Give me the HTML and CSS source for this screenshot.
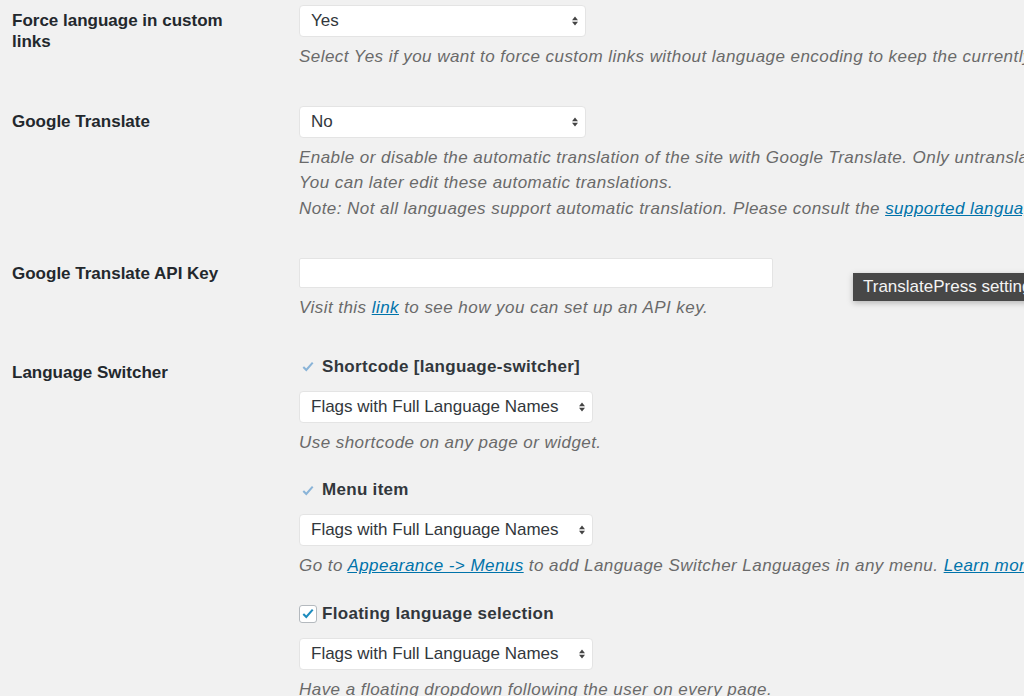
FILE: index.html
```html
<!DOCTYPE html>
<html lang="en">
<head>
  <meta charset="UTF-8">
  <meta name="viewport" content="width=device-width, initial-scale=1.0">
  <title>TranslatePress Settings</title>
  <link rel="stylesheet" href="styles.css">
</head>
<body>
  <div class="settings">

    <div class="row">
      <div class="label">Force language in custom links</div>
      <div class="field">
        <div class="select select-short"><span>Yes</span><svg class="arrows" viewBox="0 0 8 12"><path d="M4 0 L8 5 H0 Z M4 12 L8 7 H0 Z"/></svg></div>
        <p class="desc">Select Yes if you want to force custom links without language encoding to keep the currently selected language.</p>
      </div>
    </div>

    <div class="row">
      <div class="label">Google Translate</div>
      <div class="field">
        <div class="select select-short"><span>No</span><svg class="arrows" viewBox="0 0 8 12"><path d="M4 0 L8 5 H0 Z M4 12 L8 7 H0 Z"/></svg></div>
        <p class="desc">Enable or disable the automatic translation of the site with Google Translate. Only untranslated strings will receive a translation.<br>
        You can later edit these automatic translations.<br>
        Note: Not all languages support automatic translation. Please consult the <a href="#">supported languages list</a>.</p>
      </div>
    </div>

    <div class="row row-key">
      <div class="label">Google Translate API Key</div>
      <div class="field">
        <div class="input"></div>
        <p class="desc">Visit this <a href="#">link</a> to see how you can set up an API key.</p>
      </div>
    </div>

    <div class="row row-switcher">
      <div class="label">Language Switcher</div>
      <div class="field">
        <div class="check check-off"><span class="box"><svg viewBox="0 0 14 12"><path d="M1.5 6.5 L5 10 L12.5 1.5"/></svg></span>Shortcode [language-switcher]</div>
        <div class="select select-auto"><span>Flags with Full Language Names</span><svg class="arrows" viewBox="0 0 8 12"><path d="M4 0 L8 5 H0 Z M4 12 L8 7 H0 Z"/></svg></div>
        <p class="desc">Use shortcode on any page or widget.</p>

        <div class="check check-off"><span class="box"><svg viewBox="0 0 14 12"><path d="M1.5 6.5 L5 10 L12.5 1.5"/></svg></span>Menu item</div>
        <div class="select select-auto"><span>Flags with Full Language Names</span><svg class="arrows" viewBox="0 0 8 12"><path d="M4 0 L8 5 H0 Z M4 12 L8 7 H0 Z"/></svg></div>
        <p class="desc">Go to <a href="#">Appearance -&gt; Menus</a> to add Language Switcher Languages in any menu. <a href="#">Learn more in our documentation.</a></p>

        <div class="check check-on"><span class="box"><svg viewBox="0 0 14 12"><path d="M1.5 6.5 L5 10 L12.5 1.5"/></svg></span>Floating language selection</div>
        <div class="select select-auto"><span>Flags with Full Language Names</span><svg class="arrows" viewBox="0 0 8 12"><path d="M4 0 L8 5 H0 Z M4 12 L8 7 H0 Z"/></svg></div>
        <p class="desc">Have a floating dropdown following the user on every page.</p>
      </div>
    </div>

  </div>

  <div class="tooltip">TranslatePress settings</div>
</body>
</html>
```

FILE: styles.css
```css
html, body {
  margin: 0;
  overflow: hidden;
  background-color: #f1f1f1;
}

body {
  font-family: "Liberation Sans", Arial, sans-serif;
  color: #23282d;
  width: 1024px;
  height: 696px;
  position: relative;
}

/* Form table */
.settings {
  padding: 5px 0 0 12px;
}

.row {
  display: flex;
  margin-bottom: 36px;
}
.row-key { margin-top: 2px; }

.label {
  width: 232px;
  flex-shrink: 0;
  margin-right: 55px;
  padding-top: 5px;
  font-size: 17px;
  font-weight: bold;
  line-height: 21px;
  color: #23282d;
}

.field {
  flex: 1;
  min-width: 0;
}

/* Selects and inputs */
.select {
  display: flex;
  align-items: center;
  justify-content: space-between;
  box-sizing: border-box;
  height: 32px;
  padding: 0 7px 0 11px;
  background-color: #fff;
  border: 1px solid #e4e4e4;
  border-radius: 4px;
  font-size: 17px;
  color: #32373c;
}
.select-short { width: 287px; }
.select-auto { width: 294px; }

.arrows {
  width: 6px;
  height: 12px;
  fill: #444;
}

.input {
  box-sizing: border-box;
  width: 474px;
  height: 30px;
  background-color: #fff;
  border: 1px solid #e4e4e4;
  border-radius: 2px;
}

/* Descriptions */
.desc {
  margin: 7px 0 0;
  font-size: 17px;
  font-style: italic;
  letter-spacing: 0.45px;
  line-height: 25.7px;
  color: #6a6a6a;
  white-space: nowrap;
}
.desc a { color: #0073aa; }

/* Checkboxes */
.check {
  display: flex;
  align-items: center;
  height: 18px;
  margin-top: 1px;
  margin-bottom: 15px;
  font-size: 17px;
  font-weight: bold;
  letter-spacing: 0.3px;
  color: #32373c;
}
.row-switcher .desc + .check { margin-top: 26px; }

.box {
  box-sizing: border-box;
  width: 18px;
  height: 18px;
  margin-right: 5px;
  display: flex;
  align-items: center;
  justify-content: center;
  border-radius: 3px;
}
.box svg {
  width: 12px;
  height: 11px;
  fill: none;
  stroke-width: 2.4;
}
.check-off .box svg { stroke: #8ab4d8; }
.check-on .box {
  background-color: #fff;
  border: 1px solid #b4b9be;
}
.check-on .box svg { stroke: #1e8cbe; }

/* Tooltip */
.tooltip {
  position: absolute;
  left: 853px;
  top: 273px;
  height: 28px;
  padding: 0 10px;
  line-height: 28px;
  background-color: #474747;
  color: #f3f3f3;
  font-size: 17px;
  white-space: nowrap;
  box-shadow: 0 2px 6px rgba(0, 0, 0, 0.25);
}
```
